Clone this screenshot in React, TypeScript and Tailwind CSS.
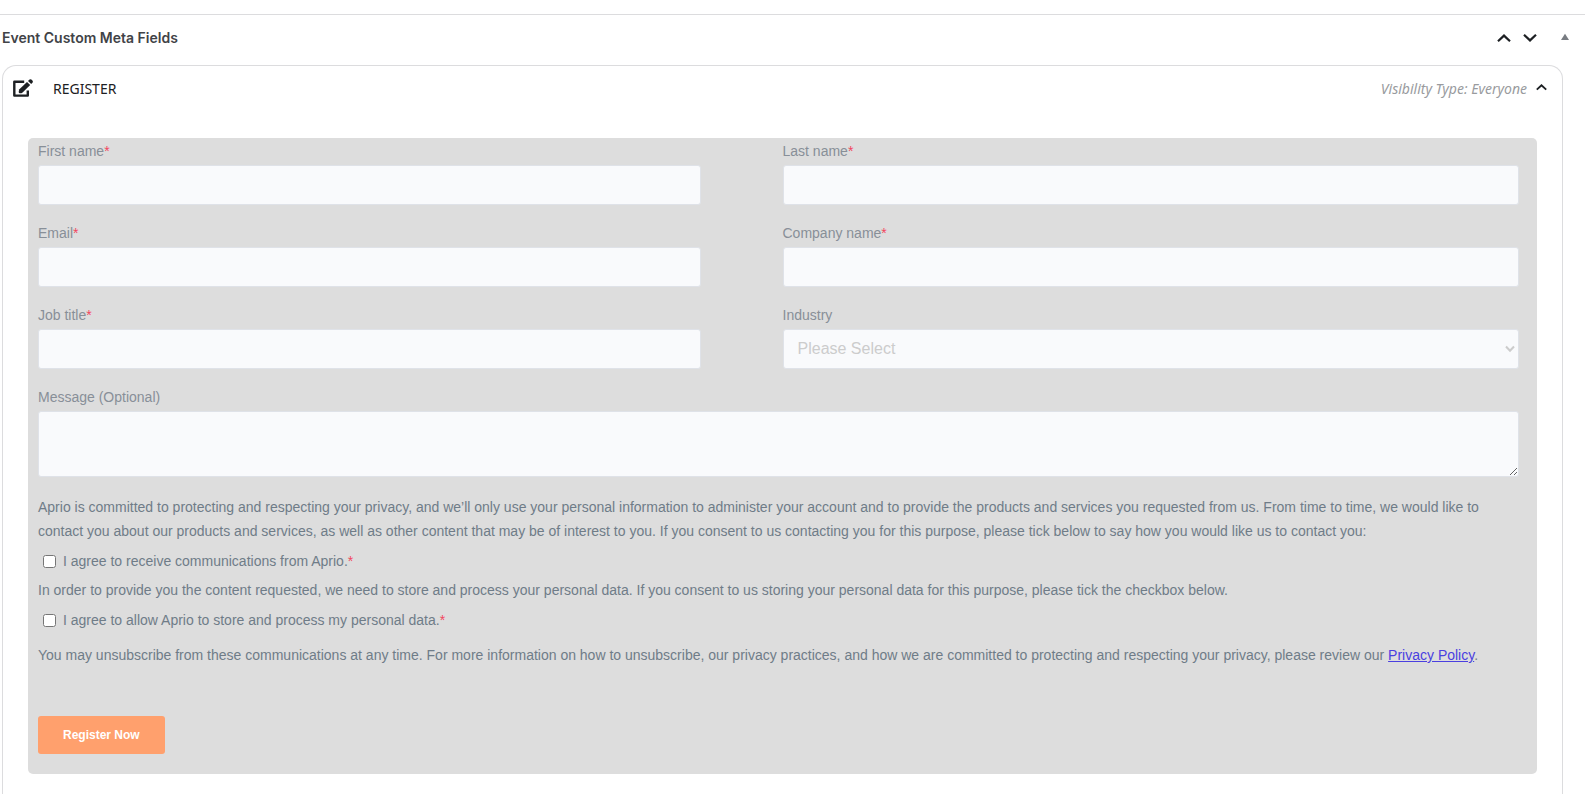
import type { ReactNode } from "react";

function Chevron({ up = false, small = false }: { up?: boolean; small?: boolean }) {
  return (
    <svg viewBox="0 0 14 8" className={small ? "w-[11px]" : "w-[14px]"} fill="none" stroke="#1d2023" strokeWidth={small ? 2.4 : 2.2} aria-hidden="true">
      <path d={up ? "M1 7.2 L7 1.6 L13 7.2" : "M1 0.8 L7 6.4 L13 0.8"} />
    </svg>
  );
}

function EditIcon() {
  return (
    <svg viewBox="0 0 20 18" className="h-[18px] w-5 shrink-0" aria-hidden="true">
      <path d="M11.2 2.8H1.3V16.6H14.8V11.4" fill="none" stroke="#1d2023" strokeWidth="2.4" strokeLinejoin="round" />
      <path d="M6.4 10.2 L14 2.9 L17.2 6.1 L9.6 13.4 Q8 14.6 5.9 14.1 Q5.3 12 6.4 10.2 Z" fill="#1d2023" />
      <path d="M15 1.9 L16.2 0.7 Q17.3 -0.3 18.4 0.6 L19.4 1.6 Q20.3 2.7 19.4 3.8 L18.2 5 Z" fill="#1d2023" />
    </svg>
  );
}

function Star() {
  return <span className="text-[#f2475f]">*</span>;
}

const box = "block w-full rounded-[3px] border border-[#dfe2e8] bg-[#f9fafc]";

function Field({ id, label, required, children }: { id: string; label: string; required?: boolean; children?: ReactNode }) {
  return (
    <div>
      <label htmlFor={id} className="block h-[27px] leading-[26px] text-[#888f98]">
        {label}
        {required && <Star />}
      </label>
      {children ?? <input id={id} type="text" className={`${box} h-10 px-3`} />}
    </div>
  );
}

function Consent({ id, children }: { id: string; children: ReactNode }) {
  return (
    <div className="mt-1.5 flex h-6 items-center gap-[7px] pl-[5px]">
      <input id={id} type="checkbox" className="size-[13px]" />
      <label htmlFor={id}>
        {children}
        <Star />
      </label>
    </div>
  );
}

export default function App() {
  return (
    <main className="bg-white pt-[14px] font-['Liberation_Sans',Arial,sans-serif] text-sm text-[#6f7c88]">
      <header className="flex h-[51px] items-center justify-between border-t border-[#dcdcde] pr-[15px] pl-0.5 pb-1">
        <h2 className="font-['Inter',sans-serif] text-sm font-semibold text-[#414347]">Event Custom Meta Fields</h2>
        <div className="flex items-center">
          <button type="button" aria-label="Move up" className="mr-3"><Chevron up /></button>
          <button type="button" aria-label="Move down" className="mr-[23px]"><Chevron /></button>
          <button type="button" aria-label="Toggle panel" className="pb-0.5">
            <svg viewBox="0 0 10 8" className="w-[10px]" aria-hidden="true"><path d="M5 0.8 L9 7 H1 Z" fill="#787c82" /></svg>
          </button>
        </div>
      </header>

      <section className="mr-[22px] ml-0.5 rounded-t-[14px] border border-b-0 border-[#dcdcde] px-[25px] pb-5">
        <div className="-mx-[15px] flex h-[46px] items-center font-['Noto_Sans',sans-serif]">
          <div className="pb-0.5"><EditIcon /></div>
          <h3 className="ml-5 text-sm text-[#1d2023]">REGISTER</h3>
          <span className="ml-auto text-sm text-[#999b9e] italic">Visibility Type: Everyone</span>
          <button type="button" aria-label="Collapse" className="mr-[5px] ml-[9px] pb-[3px]"><Chevron up small /></button>
        </div>

        <form className="mt-[26px] rounded-[5px] bg-[#dddddd] px-[10px] pb-5" onSubmit={(e) => e.preventDefault()}>
          <div className="grid grid-cols-2">
            <div className="flex flex-col gap-[15px] pr-[11%]">
              <Field id="first" label="First name" required />
              <Field id="email" label="Email" required />
              <Field id="job" label="Job title" required />
            </div>
            <div className="flex flex-col gap-[15px] pr-2">
              <Field id="last" label="Last name" required />
              <Field id="company" label="Company name" required />
              <Field id="industry" label="Industry">
                <div className="grid">
                  <select id="industry" className={`${box} col-start-1 row-start-1 h-10 appearance-none px-[14px] text-base text-[#cccccc]`}>
                    <option>Please Select</option>
                  </select>
                  <svg viewBox="0 0 10 8" className="pointer-events-none col-start-1 row-start-1 mr-1 w-[10px] self-center justify-self-end" fill="none" stroke="#cccccc" strokeWidth="2" aria-hidden="true">
                    <path d="M1 1.5 L5 5.8 L9 1.5" />
                  </svg>
                </div>
              </Field>
            </div>
          </div>
          <div className="mt-[15px] pr-2">
            <Field id="message" label="Message (Optional)">
              <textarea id="message" className={`${box} h-[66px] resize px-3 py-2`} />
            </Field>
          </div>

          <p className="mt-[18px] leading-6">
            Aprio is committed to protecting and respecting your privacy, and we’ll only use your personal information to administer your account and to provide the products and services you requested from us. From time to time, we would like to contact you about our products and services, as well as other content that may be of interest to you. If you consent to us contacting you for this purpose, please tick below to say how you would like us to contact you:
          </p>
          <Consent id="communications">I agree to receive communications from Aprio.</Consent>
          <p className="mt-[5px] leading-6">
            In order to provide you the content requested, we need to store and process your personal data. If you consent to us storing your personal data for this purpose, please tick the checkbox below.
          </p>
          <Consent id="storage">I agree to allow Aprio to store and process my personal data.</Consent>
          <p className="mt-[11px] leading-6">
            You may unsubscribe from these communications at any time. For more information on how to unsubscribe, our privacy practices, and how we are committed to protecting and respecting your privacy, please review our{" "}
            <a href="#privacy" className="text-[#4a3fe0] underline">Privacy Policy</a>.
          </p>
          <button type="submit" className="mt-[49px] block h-[38px] rounded-[3px] bg-[#ffa06d] px-[25px] text-xs font-bold text-white">Register Now</button>
        </form>
      </section>
    </main>
  );
}
